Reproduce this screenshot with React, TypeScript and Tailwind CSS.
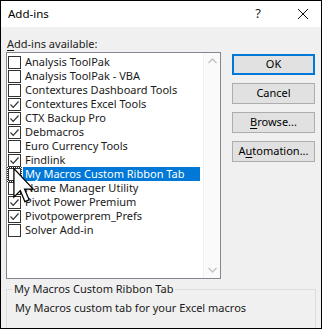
import React from "react";

const items = [
  { name: "Analysis ToolPak", on: false },
  { name: "Analysis ToolPak - VBA", on: false },
  { name: "Contextures Dashboard Tools", on: false },
  { name: "Contextures Excel Tools", on: true },
  { name: "CTX Backup Pro", on: true },
  { name: "Debmacros", on: true },
  { name: "Euro Currency Tools", on: false },
  { name: "Findlink", on: true },
  { name: "My Macros Custom Ribbon Tab", on: false, sel: true },
  { name: "Name Manager Utility", on: false },
  { name: "Pivot Power Premium", on: true },
  { name: "Pivotpowerprem_Prefs", on: true },
  { name: "Solver Add-in", on: false },
];

function Check({ on }: { on: boolean }) {
  return (
    <div className="w-[13px] h-[13px] border border-[#333] bg-white flex items-center justify-center shrink-0">
      {on && (
        <svg width="11" height="11" viewBox="0 0 11 11">
          <path d="M1.5 5.5 L4.2 8.3 L9.5 2.5" fill="none" stroke="#333" strokeWidth="1.2" />
        </svg>
      )}
    </div>
  );
}

function Btn({ children, def }: { children: React.ReactNode; def?: boolean }) {
  return (
    <div
      className={
        "w-[83px] h-[21px] flex items-center justify-center bg-[#e1e1e1] text-[11px] text-black " +
        (def ? "border-2 border-[#0078d7]" : "border border-[#adadad]")
      }
    >
      {children}
    </div>
  );
}

export default function App() {
  return (
    <div
      className="relative w-[322px] h-[329px] border border-black bg-[#f0f0f0] flex flex-col overflow-hidden text-[#1a1a1a]"
      style={{ fontFamily: '"Noto Sans", "Open Sans", sans-serif' }}
    >
      {/* title bar */}
      <div className="h-[26px] bg-white flex items-center pl-[7px] pr-[12px] shrink-0">
        <span className="text-[11.5px] text-black">Add-ins</span>
        <span className="ml-auto text-[13px] mr-[36px]">?</span>
        <svg width="12" height="12" viewBox="0 0 12 12">
          <path d="M1 1 L11 11 M11 1 L1 11" stroke="#111" strokeWidth="1" />
        </svg>
      </div>

      <div className="flex px-[5px] pt-[9px] gap-[11px]">
        <div className="flex flex-col">
          <div className="text-[11px] leading-[15px] ml-[1px] mb-[1px]">
            <span className="underline underline-offset-2">A</span>dd-ins available:
          </div>
          <div className="w-[215px] h-[227px] border border-[#828790] bg-white flex">
            <div className="flex-1 flex flex-col pt-[2px]">
              {items.map((it, i) => (
                <div key={i} className="h-[14px] flex items-center gap-[1px]">
                  <div className={"p-[1px] " + (it.sel ? "outline outline-1 outline-dotted outline-[#333] -outline-offset-1" : "")}>
                    <Check on={it.on} />
                  </div>
                  <span
                    className={
                      "text-[11px] leading-[14px] px-[2px] whitespace-nowrap " +
                      (it.sel ? "bg-[#0078d7] text-white w-[177px]" : "")
                    }
                  >
                    {it.name}
                  </span>
                </div>
              ))}
            </div>
            <div className="w-[17px] bg-[#fafafa] border-l border-[#f0f0f0] flex flex-col justify-between items-center py-[5px]">
              <svg width="9" height="6" viewBox="0 0 9 6">
                <path d="M0.5 5 L4.5 1 L8.5 5" fill="none" stroke="#c2c2c2" strokeWidth="1.3" />
              </svg>
              <svg width="9" height="6" viewBox="0 0 9 6">
                <path d="M0.5 1 L4.5 5 L8.5 1" fill="none" stroke="#c2c2c2" strokeWidth="1.3" />
              </svg>
            </div>
          </div>
        </div>

        <div className="flex flex-col gap-[8px] pt-[18px]">
          <Btn def>OK</Btn>
          <Btn>Cancel</Btn>
          <Btn>
            <span className="underline underline-offset-2">B</span>rowse...
          </Btn>
          <Btn>
            A<span className="underline underline-offset-2">u</span>tomation...
          </Btn>
        </div>
      </div>

      {/* description group */}
      <div className="relative mx-[5px] mt-[10px] h-[70px] shrink-0 border border-[#dcdcdc]">
        <div className="absolute -top-[9px] left-[5px] bg-[#f0f0f0] px-[2px] text-[11px] leading-[16px]">
          My Macros Custom Ribbon Tab
        </div>
        <div className="pt-[10px] pl-[8px] text-[11px] leading-[16px]">
          My Macros custom tab for your Excel macros
        </div>
      </div>

      {/* mouse cursor */}
      <svg className="absolute left-[12px] top-[166px]" width="22" height="40" viewBox="0 0 12 21">
        <path
          d="M0.5 0.5 L0.5 16 L4 12.5 L6.5 18.5 L8.8 17.5 L6.3 11.6 L11 11.6 Z"
          fill="white"
          stroke="black"
          strokeWidth="0.7"
          strokeLinejoin="miter"
        />
      </svg>
    </div>
  );
}
